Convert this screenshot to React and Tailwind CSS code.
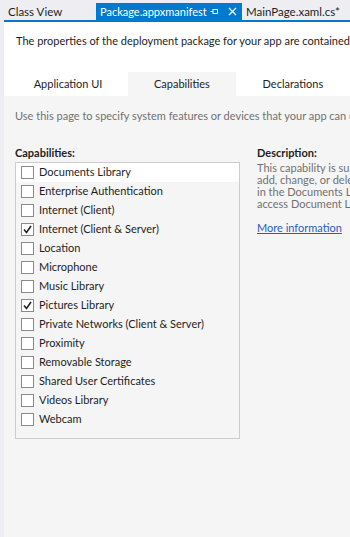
import React from "react";

const items = [
  ["Documents Library", false],
  ["Enterprise Authentication", false],
  ["Internet (Client)", false],
  ["Internet (Client & Server)", true],
  ["Location", false],
  ["Microphone", false],
  ["Music Library", false],
  ["Pictures Library", true],
  ["Private Networks (Client & Server)", false],
  ["Proximity", false],
  ["Removable Storage", false],
  ["Shared User Certificates", false],
  ["Videos Library", false],
  ["Webcam", false],
];

function Box({ checked }) {
  return (
    <div className="w-[13px] h-[13px] border border-[#8a8a8a] bg-white flex items-center justify-center shrink-0">
      {checked && (
        <svg width="9" height="9" viewBox="0 0 9 9">
          <path d="M1 4.5 L3.5 7.5 L8 1" fill="none" stroke="#222" strokeWidth="1.6" />
        </svg>
      )}
    </div>
  );
}

export default function App() {
  return (
    <div
      className="w-[350px] h-[537px] overflow-hidden bg-[#eeeef2] flex flex-col text-[11px] text-[#1e1e1e]"
      style={{ fontFamily: 'Lato, "Noto Sans", sans-serif' }}
    >
      {/* doc tabs */}
      <div className="h-[20px] flex items-end pl-[8px] whitespace-nowrap shrink-0 text-[11.5px]">
        <div className="h-[17px] leading-[17px] w-[88px] text-[#1e1e1e]">Class View</div>
        <div className="h-[17px] leading-[17px] w-[146px] bg-[#007acc] text-white pl-[4px] pr-[5px] flex items-center text-[11px]">
          <span>Package.appxmanifest</span>
          <span className="flex-1" />
          <svg width="9" height="9" viewBox="0 0 9 9" className="mr-[9px]">
            <path d="M0.5 4.5 H3 M3 2 V7 M3 2.5 H7.5 V6.5 H3" fill="none" stroke="white" strokeWidth="1" />
          </svg>
          <svg width="9" height="9" viewBox="0 0 9 9">
            <path d="M1 1 L8 8 M8 1 L1 8" stroke="white" strokeWidth="1.3" />
          </svg>
        </div>
        <div className="h-[17px] leading-[17px] pl-[4px]">MainPage.xaml.cs*</div>
      </div>
      <div className="h-[2px] bg-[#007acc] ml-[4px] shrink-0" />
      <div className="flex-1 flex flex-col ml-[4px] bg-white">
        <div className="h-[50px] pl-[12px] pt-[11px] whitespace-nowrap overflow-hidden shrink-0">
          The properties of the deployment package for your app are contained in the file
        </div>
        <div className="flex h-[24px] shrink-0 whitespace-nowrap">
          <div className="w-[128px] flex items-center justify-center pl-[4px]">Application UI</div>
          <div className="w-[111px] flex items-center justify-center bg-[#f5f5f5]">Capabilities</div>
          <div className="w-[118px] flex items-center justify-center">Declarations</div>
        </div>
        <div className="flex-1 bg-[#f5f5f5] pl-[11px] flex flex-col">
          <div className="pt-[12px] h-[48px] whitespace-nowrap overflow-hidden text-[#717171]">
            Use this page to specify system features or devices that your app can use.
          </div>
          <div className="flex">
            <div className="w-[225px] shrink-0">
              <div className="font-bold h-[17px] leading-[17px]">Capabilities:</div>
              <div className="mt-[1px] h-[277px] border border-[#cccccc] bg-[#f5f5f5]">
                {items.map(([label, checked], i) => (
                  <div
                    key={label}
                    className={
                      "h-[19px] flex items-center gap-[5px] pl-[5px] whitespace-nowrap " +
                      (i === 0 ? "bg-white" : "")
                    }
                  >
                    <Box checked={checked} />
                    <span>{label}</span>
                  </div>
                ))}
              </div>
            </div>
            <div className="ml-[17px] w-[110px] shrink-0 whitespace-nowrap overflow-hidden">
              <div className="font-bold h-[17px] leading-[17px]">Description:</div>
              <div className="mt-[1px] text-[#717171] leading-[12px] text-[11px]">
                <div>This capability is subject to restrictions</div>
                <div>add, change, or delete files</div>
                <div>in the Documents Library</div>
                <div>access Document Library</div>
              </div>
              <div className="mt-[10px] text-[#1f5fbf] underline">More information</div>
            </div>
          </div>
        </div>
      </div>
    </div>
  );
}
